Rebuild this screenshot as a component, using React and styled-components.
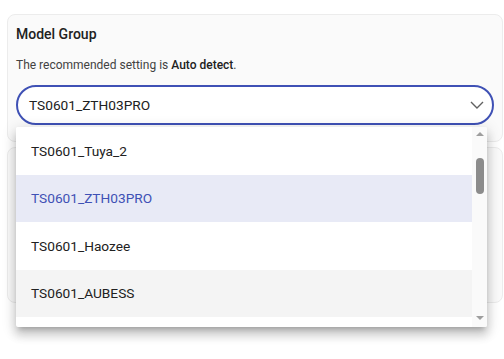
import React from 'react';
import styled, { createGlobalStyle } from 'styled-components';

const GlobalStyle = createGlobalStyle`
  html, body {
    margin: 0;
    min-height: 100%;
    background: #fff;
    font-family: Roboto, "Liberation Sans", sans-serif;
  }
`;

const Page = styled.div`
  box-sizing: border-box;
  min-height: 359px;
  padding: 14px 1px 0 7px;
  display: flex;
  flex-direction: column;
  gap: 5px;
`;

const Card = styled.section`
  position: relative;
  box-sizing: border-box;
  height: ${(p) => p.height}px;
  padding: 9px 8px 0;
  background: #fafafa;
  border: 1px solid #ececec;
  border-radius: 8px;
`;

const Title = styled.h3`
  margin: 0;
  font-size: 14px;
  line-height: 20px;
  font-weight: 500;
  color: #212121;
`;

const Description = styled.p`
  margin: 13px 0 12px;
  font-size: 12px;
  line-height: 16px;
  color: #424242;
  b {
    font-weight: 500;
    color: #212121;
  }
`;

const SelectWrap = styled.div`
  position: relative;
  z-index: 10;
`;

const SelectBox = styled.div`
  box-sizing: border-box;
  height: 40px;
  display: flex;
  align-items: center;
  justify-content: space-between;
  padding: 0 8px 0 11px;
  background: #fff;
  border: 2px solid #3f51b5;
  border-radius: 20px;
  font-size: 13.7px;
  color: #212121;
`;

const Menu = styled.div`
  position: absolute;
  top: 42px;
  left: 0;
  right: 7px;
  height: 200px;
  display: flex;
  background: #fff;
  border-radius: 2px;
  overflow: hidden;
  box-shadow: 0 5px 5px -3px rgba(0, 0, 0, 0.2), 0 8px 10px 1px rgba(0, 0, 0, 0.14),
    0 3px 14px 2px rgba(0, 0, 0, 0.12);
`;

const List = styled.ul`
  flex: 1;
  margin: 0;
  padding: 0;
  list-style: none;
`;

const Item = styled.li`
  height: 47.5px;
  display: flex;
  align-items: center;
  padding-left: 15px;
  font-size: 13.7px;
  color: ${(p) => (p.selected ? '#3f51b5' : '#212121')};
  background: ${(p) => (p.selected ? '#e8eaf6' : p.hover ? '#f4f4f4' : '#fff')};
`;

const Scrollbar = styled.div`
  width: 15px;
  display: flex;
  flex-direction: column;
  align-items: center;
  background: #fafafa;
  padding: 5px 0 7px;
  box-sizing: border-box;
`;

const Arrow = styled.div`
  width: 0;
  height: 0;
  border-left: 4px solid transparent;
  border-right: 4px solid transparent;
  ${(p) => (p.down ? 'border-top: 4px solid #9e9e9e;' : 'border-bottom: 4px solid #9e9e9e;')}
  ${(p) => (p.down ? 'margin-top: auto;' : '')}
`;

const Thumb = styled.div`
  width: 8px;
  height: 36px;
  margin-top: 22px;
  border-radius: 4px;
  background: #8c8c8c;
`;

const options = ['TS0601_Tuya_2', 'TS0601_ZTH03PRO', 'TS0601_Haozee', 'TS0601_AUBESS'];

export default function App() {
  return (
    <>
      <GlobalStyle />
      <Page>
        <Card height={128}>
          <Title>Model Group</Title>
          <Description>
            The recommended setting is <b>Auto detect</b>.
          </Description>
          <SelectWrap>
            <SelectBox>
              <span>TS0601_ZTH03PRO</span>
              <svg width="14" height="8" viewBox="0 0 14 8" fill="none">
                <path d="M1 1l6 6 6-6" stroke="#616161" strokeWidth="1.4" />
              </svg>
            </SelectBox>
            <Menu>
              <List>
                {options.map((o, i) => (
                  <Item key={o} selected={i === 1} hover={i === 3}>
                    {o}
                  </Item>
                ))}
              </List>
              <Scrollbar>
                <Arrow />
                <Thumb />
                <Arrow down />
              </Scrollbar>
            </Menu>
          </SelectWrap>
        </Card>
        <Card height={156} />
      </Page>
    </>
  );
}
